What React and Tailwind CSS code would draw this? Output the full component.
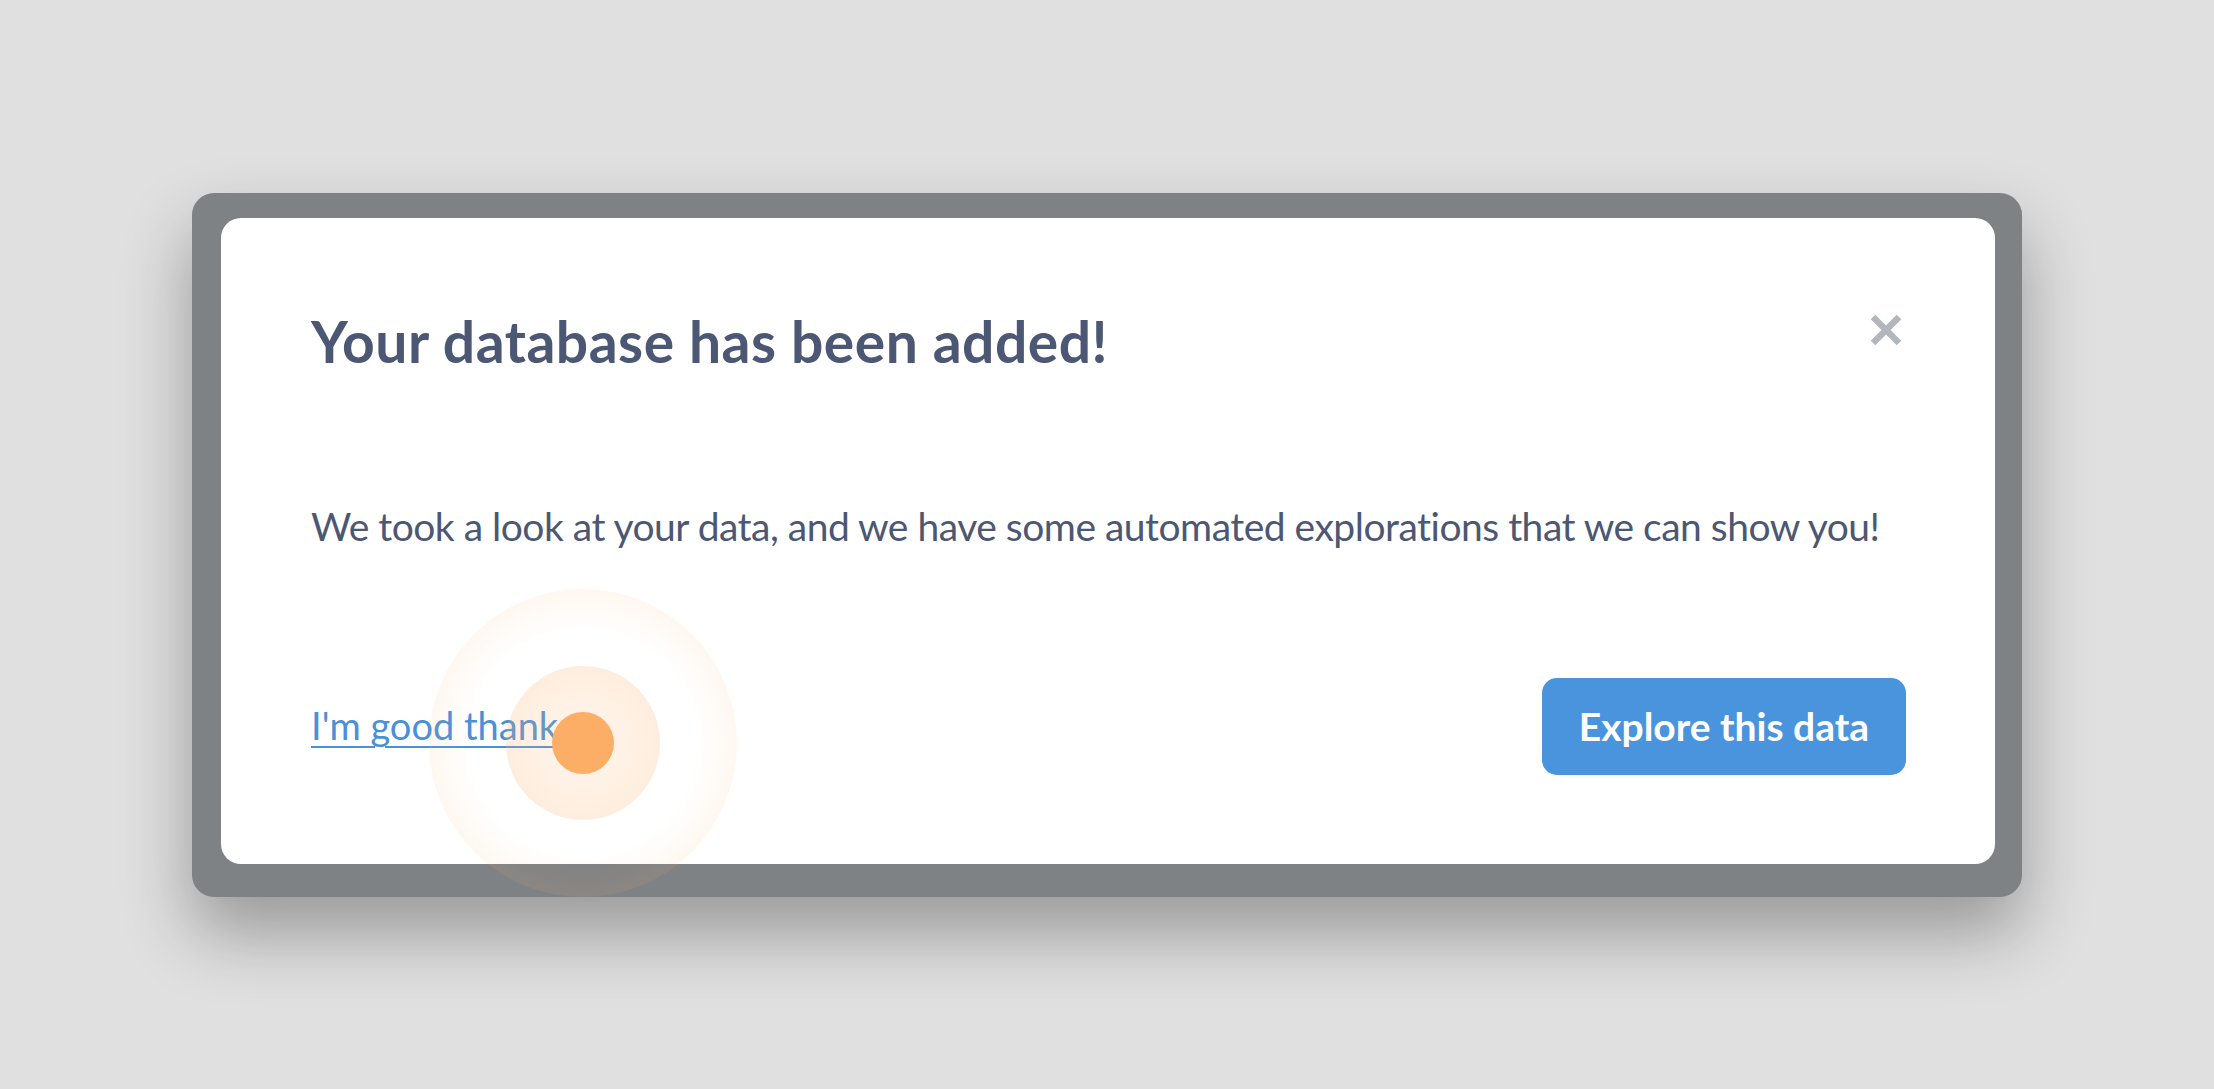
export default function App() {
  return (
    <div className="w-full h-[1089px] bg-[#e0e0e0] flex items-center justify-center" style={{ fontFamily: 'Lato, "Noto Sans", sans-serif' }}>
      <div className="relative w-[1830px] h-[704px] bg-[#7f8285] rounded-[22px] pt-[25px] pl-[29px] pr-[27px] pb-[33px] shadow-[0_36px_70px_rgba(0,0,0,0.32)]">
        <div className="w-full h-full bg-white rounded-[20px] px-[90px] pt-[90px] pb-[89px] flex flex-col">
          <div className="flex items-start justify-between">
            <h1 className="text-[57px] leading-[1.2] font-bold tracking-[0.5px] text-[#4c5773] -mt-[1px]">Your database has been added!</h1>
            <button className="mt-[5px] mr-[2px] w-[34px] h-[34px] flex items-center justify-center">
              <svg width="34" height="34" viewBox="0 0 34 34">
                <path d="M4 4 L30 30 M30 4 L4 30" stroke="#b2b6bd" strokeWidth="6.5" strokeLinecap="butt" />
              </svg>
            </button>
          </div>
          <p className="mt-[128px] text-[39px] leading-[1.2] tracking-[-0.5px] whitespace-nowrap text-[#4c5773]">
            We took a look at your data, and we have some automated explorations that we can show you!
          </p>
          <div className="mt-auto flex items-center justify-between">
            <a className="text-[38px] leading-[1.2] text-[#4a90d9] underline decoration-[2px] underline-offset-[6px] cursor-pointer">I'm good thanks</a>
            <button className="h-[97px] px-[37px] mr-[-1px] rounded-[15px] bg-[#4a94dd] text-white text-[39px] font-bold leading-none">
              Explore this data
            </button>
          </div>
        </div>
        <div className="absolute left-[237px] top-[396px] w-[308px] h-[308px] rounded-full bg-[radial-gradient(circle,rgba(253,174,102,0)_52%,rgba(253,174,102,0.24)_100%)] flex items-center justify-center">
          <div className="w-[154px] h-[154px] rounded-full bg-[radial-gradient(circle,rgba(253,174,102,0.17)_40%,rgba(253,174,102,0.27)_100%)] flex items-center justify-center">
            <div className="w-[62px] h-[62px] rounded-full bg-[#fdae66]" />
          </div>
        </div>
      </div>
    </div>
  );
}
